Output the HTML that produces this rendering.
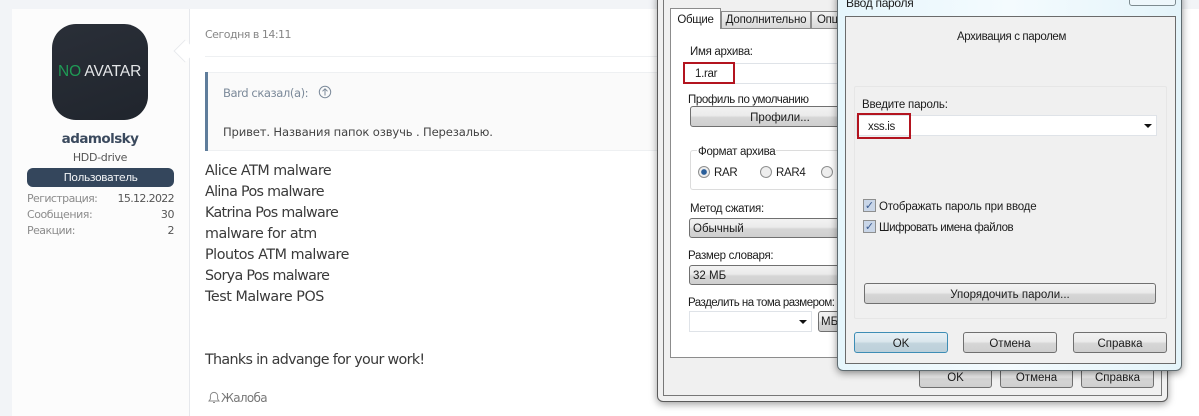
<!DOCTYPE html>
<html><head><meta charset="utf-8"><style>
*{box-sizing:border-box}
html,body{margin:0;padding:0}
body{width:1199px;height:416px;overflow:hidden;position:relative;background:#f2f4f7;font-family:"DejaVu Sans","Liberation Sans",sans-serif;color:#333}
.a{position:absolute;white-space:nowrap}
.w{font-family:"Liberation Sans",sans-serif;font-size:11.5px;color:#1c1c1c;letter-spacing:-.3px;transform:translateY(1px)}
.btn{position:absolute;border:1px solid #707070;border-radius:3px;background:linear-gradient(#f2f2f2 0,#ebebeb 45%,#d6d6d6 55%,#cfcfcf 100%);text-align:center;font-family:"Liberation Sans",sans-serif;font-size:11.5px;color:#1c1c1c;padding-top:1px}
.sel{position:absolute;border:1px solid #707070;border-radius:3px;background:linear-gradient(#f2f2f2 0,#ebebeb 45%,#d6d6d6 55%,#cfcfcf 100%);font-family:"Liberation Sans",sans-serif;font-size:11.5px;color:#1c1c1c;padding-left:3px;padding-top:1px}
.inp{position:absolute;background:#fff;border:1px solid #dfe3e8}
.red{position:absolute;border:2px solid #b3141f}
.cb{position:absolute;width:13px;height:13px;border:1px solid #8e8f8f;background:#c9d6e8;text-align:center;font:bold 11px/11px "DejaVu Sans",sans-serif;color:#3a5a90}
.r{position:absolute;width:12px;height:12px;border-radius:50%;border:1px solid #8e8f8f;background:#eee}
.tri{position:absolute;width:0;height:0;border-left:4px solid transparent;border-right:4px solid transparent;border-top:4px solid #111}
.b{font-size:14.3px;color:#3a3a3a;letter-spacing:-.45px;line-height:21px;transform:translateY(1px)}
.t{letter-spacing:-.68px}
.s{font-size:11px;color:#8c8c8c;letter-spacing:-.45px;transform:translateY(1px)}
</style></head><body>

<div class="a" style="left:12px;top:9px;width:177px;height:407px;background:#fcfcfc"></div>
<div class="a" style="left:189px;top:9px;width:1010px;height:407px;background:#fff;border-left:1px solid #e6e8ec"></div>
<div class="a" style="left:176px;top:42px;width:18px;height:18px;background:#fff;border-left:1px solid #e6e8ec;border-bottom:1px solid #e6e8ec;transform:rotate(45deg) scale(.9)"></div>
<div class="a" style="left:190px;top:38px;width:8px;height:28px;background:#fff"></div>

<div class="a" style="left:52px;top:24px;width:96px;height:96px;border-radius:24px;background:linear-gradient(160deg,#2a2f38,#20252d)"></div>
<div class="a" style="left:58px;top:62px;font:15.5px/20px 'Liberation Sans',sans-serif;letter-spacing:-.1px"><span style="color:#1f9a55">NO</span> <span style="color:#e4e6e8">AVATAR</span></div>
<div class="a" style="left:12px;width:176px;top:130px;text-align:center;font-size:13.5px;font-weight:bold;color:#3b4a5e;letter-spacing:-.55px;line-height:18px">adamolsky</div>
<div class="a" style="left:12px;width:176px;top:151px;text-align:center;font-size:11px;color:#555;letter-spacing:-.3px;line-height:14px">HDD-drive</div>
<div class="a" style="left:27px;top:168px;width:147px;height:19px;border-radius:6px;background:#34465c;color:#f2f4f6;text-align:center;font-size:11px;line-height:20px;letter-spacing:-.6px">Пользователь</div>
<div class="a s" style="left:27px;top:191px;letter-spacing:-.6px">Регистрация:</div><div class="a s" style="right:1025px;top:191px;color:#555;letter-spacing:-.65px">15.12.2022</div>
<div class="a s" style="left:27px;top:207px">Сообщения:</div><div class="a s" style="right:1025px;top:207px;color:#555">30</div>
<div class="a s" style="left:27px;top:223px;letter-spacing:-.55px">Реакции:</div><div class="a s" style="right:1025px;top:223px;color:#555">2</div>

<div class="a s" style="left:205px;top:27px;color:#868686;letter-spacing:-.5px">Сегодня в 14:11</div>
<div class="a" style="left:205px;top:56px;width:460px;height:1px;background:#eef0f2"></div>
<div class="a" style="left:205px;top:72px;width:460px;height:79px;background:#fafafa;border-top:1px solid #eef0f2;border-bottom:1px solid #eef0f2"></div>
<div class="a" style="left:205px;top:72px;width:3px;height:79px;background:#5f7d9b"></div>
<div class="a" style="left:223px;top:86px;font-size:11.6px;color:#7c8a9a;letter-spacing:-.45px">Bard сказал(а):</div>
<svg class="a" style="left:318px;top:85px" width="14" height="14" viewBox="0 0 14 14" fill="none" stroke="#7c8a9a"><circle cx="7" cy="7" r="5.7"/><path d="M7 10.5V4M4.5 6.3 7 3.8l2.5 2.5"/></svg>
<div class="a" style="left:223px;top:125px;font-size:11.6px;color:#444;letter-spacing:-.16px">Привет. Названия папок озвучь . Перезалью.</div>

<div class="a b" style="left:205px;top:160px;letter-spacing:-.5px">Alice ATM malware</div>
<div class="a b t" style="left:205px;top:181px">Alina Pos malware</div>
<div class="a b t" style="left:205px;top:202px">Katrina Pos malware</div>
<div class="a b" style="left:205px;top:223px">malware for atm</div>
<div class="a b" style="left:205px;top:244px">Ploutos ATM malware</div>
<div class="a b t" style="left:205px;top:265px">Sorya Pos malware</div>
<div class="a b" style="left:205px;top:286px">Test Malware POS</div>
<div class="a b t" style="left:205px;top:349px">Thanks in advange for your work!</div>
<svg class="a" style="left:208px;top:391px" width="12" height="13" viewBox="0 0 12 13" fill="none" stroke="#8a8a8a"><path d="M1 10h10L9.6 8V5a3.6 3.6 0 0 0-7.2 0v3zM5 11.5h2"/></svg>
<div class="a" style="left:221px;top:391px;font-size:12px;color:#777;letter-spacing:-.7px">Жалоба</div>

<!-- back window -->
<div class="a" style="left:657px;top:-10px;width:511px;height:412px;border:1px solid #5a5a5a;border-radius:6px;background:#f0f0f0;box-shadow:0 2px 8px rgba(0,0,0,.4)"></div>
<div class="a" style="left:663px;top:-5px;width:499px;height:401px;border:1px solid #777;background:#f0f0f0"></div>
<div class="a" style="left:670px;top:28px;width:480px;height:330px;border:1px solid #8c8c8c;background:#fff"></div>
<div class="a w" style="left:670px;top:8px;width:51px;height:21px;background:#fff;border:1px solid #8c8c8c;border-bottom:0;text-align:center;line-height:20px;transform:none;padding-top:1px">Общие</div>
<div class="a w" style="left:721px;top:11px;width:90px;height:18px;background:linear-gradient(#f4f4f4,#d8d8d8);border:1px solid #8c8c8c;text-align:center;line-height:17px;transform:none;letter-spacing:-.15px">Дополнительно</div>
<div class="a w" style="left:811px;top:11px;width:40px;height:18px;background:linear-gradient(#f4f4f4,#d8d8d8);border:1px solid #8c8c8c;padding-left:5px;line-height:17px;transform:none">Опции</div>

<div class="a w" style="left:690px;top:45px">Имя архива:</div>
<div class="inp" style="left:684px;top:63px;width:160px;height:21px"></div>
<div class="a w" style="left:695px;top:67px">1.rar</div>
<div class="red" style="left:683px;top:62px;width:52px;height:22px"></div>
<div class="a w" style="left:688px;top:93px;letter-spacing:-.4px">Профиль по умолчанию</div>
<div class="btn" style="left:690px;top:106px;width:180px;height:21px;line-height:20px">Профили...</div>
<div class="a" style="left:690px;top:150px;width:160px;height:40px;border:1px solid #dcdcdc;border-radius:3px"></div>
<div class="a w" style="left:697px;top:145px;background:#fff;padding:0 1px">Формат архива</div>
<div class="r" style="left:698px;top:166px;background:radial-gradient(#2a5f9a 0 35%,#eee 45%)"></div><div class="a w" style="left:714px;top:166px">RAR</div>
<div class="r" style="left:760px;top:166px"></div><div class="a w" style="left:776px;top:166px">RAR4</div>
<div class="r" style="left:821px;top:166px"></div>
<div class="a w" style="left:690px;top:202px">Метод сжатия:</div>
<div class="sel" style="left:689px;top:218px;width:155px;height:20px;line-height:18px">Обычный</div>
<div class="a w" style="left:688px;top:249px">Размер словаря:</div>
<div class="sel" style="left:689px;top:265px;width:155px;height:20px;line-height:18px">32 МБ</div>
<div class="a w" style="left:688px;top:296px;letter-spacing:-.5px">Разделить на тома размером:</div>
<div class="inp" style="left:689px;top:311px;width:123px;height:21px"></div>
<div class="tri" style="left:799px;top:320px"></div>
<div class="sel" style="left:818px;top:311px;width:25px;height:21px;line-height:19px;padding-left:2px">МБ</div>
<div class="btn" style="left:919px;top:368px;width:73px;height:20px;line-height:18px;padding-top:0">OK</div>
<div class="btn" style="left:1000px;top:368px;width:73px;height:20px;line-height:18px;padding-top:0">Отмена</div>
<div class="btn" style="left:1081px;top:368px;width:73px;height:20px;line-height:18px;padding-top:0">Справка</div>

<!-- front window -->
<div class="a" style="left:837px;top:-10px;width:345px;height:381px;border:1px solid #5f6b70;border-radius:6px;background:linear-gradient(90deg,#e6f6fc,#f4fbfe 50%,#e4f4fa);box-shadow:0 2px 8px rgba(0,0,0,.45)"></div>
<div class="a w" style="left:846px;top:-5px;font-size:12px">Ввод пароля</div>
<div class="a" style="left:1129px;top:-8px;width:47px;height:14px;border:1px solid #7d8b90;border-radius:3px;background:#eef7fb"></div>
<div class="a" style="left:845px;top:16px;width:331px;height:348px;border:1px solid #6b6b6b;background:#f0f0f0"></div>
<div class="a w" style="left:846px;top:30px;width:331px;text-align:center;letter-spacing:-.37px">Архивация с паролем</div>
<div class="a" style="left:854px;top:86px;width:313px;height:233px;border:1px solid #e6e6e6;border-radius:2px;background:#f0f0f0"></div>
<div class="a w" style="left:862px;top:98px;letter-spacing:-.2px">Введите пароль:</div>
<div class="inp" style="left:856px;top:115px;width:301px;height:21px"></div>
<div class="a w" style="left:868px;top:120px">xss.is</div>
<div class="red" style="left:857px;top:113px;width:54px;height:26px"></div>
<div class="tri" style="left:1144px;top:124px"></div>
<div class="cb" style="left:863px;top:199px">✓</div><div class="a w" style="left:879px;top:200px;letter-spacing:-.2px">Отображать пароль при вводе</div>
<div class="cb" style="left:863px;top:220px">✓</div><div class="a w" style="left:879px;top:221px;letter-spacing:-.45px">Шифровать имена файлов</div>
<div class="btn" style="left:864px;top:283px;width:292px;height:21px;line-height:20px">Упорядочить пароли...</div>
<div class="btn" style="left:854px;top:332px;width:94px;height:21px;line-height:20px;border-color:#3d8db5;background:linear-gradient(#e6f0f5,#dbe7ed 45%,#c2d4dd 55%,#bcd0da)">OK</div>
<div class="btn" style="left:963px;top:332px;width:94px;height:21px;line-height:20px">Отмена</div>
<div class="btn" style="left:1073px;top:332px;width:94px;height:21px;line-height:20px">Справка</div>
</body></html>
